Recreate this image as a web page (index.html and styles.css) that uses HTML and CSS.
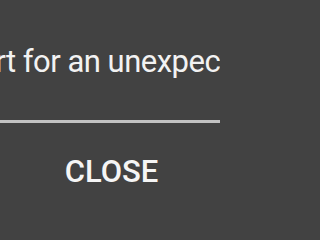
FILE: index.html
```html
<!DOCTYPE html>
<html>
<head>
<meta charset="utf-8">
<link rel="stylesheet" href="styles.css">
</head>
<body>
<div class="dialog">
  <div class="message"><p class="message-text">restart for an unexpected error</p></div>
  <div class="divider"></div>
  <div class="actions"><button class="close-btn">CLOSE</button></div>
</div>
</body>
</html>
```
FILE: styles.css
```css
html, body {
  margin: 0;
  padding: 0;
  background: #424242;
}
.dialog {
  width: 220px;
  height: 220px;
  display: flex;
  flex-direction: column;
  overflow: hidden;
  background: #424242;
  font-family: Roboto, "Liberation Sans", sans-serif;
}
.message {
  height: 120px;
  padding-top: 46px;
  box-sizing: border-box;
  overflow: hidden;
  flex: none;
}
.message-text {
  margin: 0 0 0 -72px;
  white-space: nowrap;
  font-size: 31px;
  line-height: 31px;
  letter-spacing: -0.5px;
  font-weight: 400;
  color: #f2f2f2;
}
.divider {
  height: 3px;
  background: #c2c2c2;
  flex: none;
}
.actions {
  display: flex;
  justify-content: center;
  padding-top: 33px;
}
.close-btn {
  border: 0;
  padding: 0;
  margin: 0 0 0 3px;
  background: transparent;
  font-family: Roboto, "Liberation Sans", sans-serif;
  font-size: 31px;
  line-height: 31px;
  font-weight: 500;
  color: #f5f5f5;
}
```
